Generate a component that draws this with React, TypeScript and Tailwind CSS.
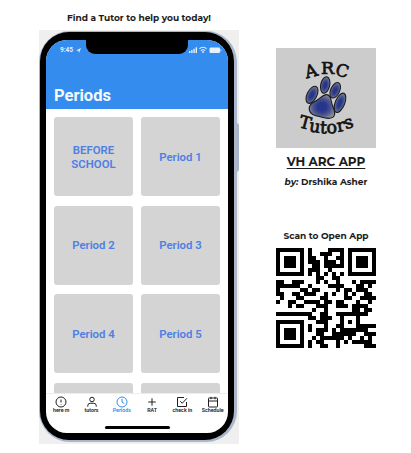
import type { ReactNode } from "react";

const QR_SIZE = 25;

/** Byte-mode, version 2, level L code with mask pattern 4. */
function qrMatrix(text: string): boolean[][] {
  const bits: number[] = [];
  const push = (value: number, length: number) => {
    for (let i = length - 1; i >= 0; i--) bits.push((value >> i) & 1);
  };
  push(4, 4);
  push(text.length, 8);
  for (const ch of text) push(ch.charCodeAt(0), 8);
  push(0, 4);
  const data: number[] = [];
  for (let i = 0; i < bits.length; i += 8) {
    data.push(parseInt(bits.slice(i, i + 8).join("").padEnd(8, "0"), 2));
  }
  for (let pad = 0xec; data.length < 34; pad = pad === 0xec ? 0x11 : 0xec) data.push(pad);

  const mul = (a: number, b: number) => {
    let r = 0;
    for (let i = 7; i >= 0; i--) {
      r = (r << 1) ^ ((r >> 7) * 0x11d);
      r ^= ((b >> i) & 1) * a;
    }
    return r;
  };
  const gen: number[] = new Array(10).fill(0);
  gen[9] = 1;
  let root = 1;
  for (let i = 0; i < 10; i++) {
    for (let j = 0; j < 10; j++) {
      gen[j] = mul(gen[j], root);
      if (j + 1 < 10) gen[j] ^= gen[j + 1];
    }
    root = mul(root, 2);
  }
  const ecc: number[] = new Array(10).fill(0);
  for (const b of data) {
    const factor = b ^ (ecc.shift() as number);
    ecc.push(0);
    gen.forEach((g, i) => (ecc[i] ^= mul(g, factor)));
  }
  const codewords = [...data, ...ecc];

  const m = Array.from({ length: QR_SIZE }, () => new Array<boolean>(QR_SIZE).fill(false));
  const used = Array.from({ length: QR_SIZE }, () => new Array<boolean>(QR_SIZE).fill(false));
  const set = (r: number, c: number, v: boolean) => {
    if (r < 0 || c < 0 || r >= QR_SIZE || c >= QR_SIZE) return;
    m[r][c] = v;
    used[r][c] = true;
  };
  for (let i = 0; i < QR_SIZE; i++) {
    set(6, i, i % 2 === 0);
    set(i, 6, i % 2 === 0);
  }
  for (const [r, c] of [[3, 3], [3, 21], [21, 3]]) {
    for (let y = -4; y <= 4; y++)
      for (let x = -4; x <= 4; x++) {
        const d = Math.max(Math.abs(x), Math.abs(y));
        set(r + y, c + x, d !== 2 && d !== 4);
      }
  }
  for (let y = -2; y <= 2; y++)
    for (let x = -2; x <= 2; x++) set(18 + y, 18 + x, Math.max(Math.abs(x), Math.abs(y)) !== 1);

  const format = 0b110011000101111;
  const f = (i: number) => ((format >> i) & 1) === 1;
  for (let i = 0; i <= 5; i++) set(i, 8, f(i));
  set(7, 8, f(6));
  set(8, 8, f(7));
  set(8, 7, f(8));
  for (let i = 9; i < 15; i++) set(8, 14 - i, f(i));
  for (let i = 0; i < 8; i++) set(8, QR_SIZE - 1 - i, f(i));
  for (let i = 8; i < 15; i++) set(QR_SIZE - 15 + i, 8, f(i));
  set(QR_SIZE - 8, 8, true);

  let n = 0;
  for (let right = QR_SIZE - 1; right >= 1; right -= 2) {
    if (right === 6) right = 5;
    for (let v = 0; v < QR_SIZE; v++) {
      for (let k = 0; k < 2; k++) {
        const c = right - k;
        const up = ((right + 1) & 2) === 0;
        const r = up ? QR_SIZE - 1 - v : v;
        if (used[r][c]) continue;
        const bit = n < codewords.length * 8 ? (codewords[n >> 3] >> (7 - (n & 7))) & 1 : 0;
        n++;
        const flip = (Math.floor(r / 2) + Math.floor(c / 3)) % 2 === 0;
        m[r][c] = (bit === 1) !== flip;
      }
    }
  }
  return m;
}

const modules = qrMatrix("https://vharc.glideapp.io/");

function QrCode() {
  return (
    <svg width="100" height="100" viewBox="0 0 25 25" shapeRendering="crispEdges" className="block">
      {modules.flatMap((row, r) =>
        row.map((on, c) => (on ? <rect key={`${r}-${c}`} x={c} y={r} width="1" height="1" /> : null)),
      )}
    </svg>
  );
}

function Logo() {
  const toes = [
    [312, 94.8, 4.8, 9.3, 27],
    [325.2, 85, 4.5, 8.3, 12],
    [335.2, 90.3, 4.5, 8.2, 24],
    [340, 102.8, 4.7, 10.2, 22],
  ];
  const letters: [string, number, number, number, number][] = [
    ["A", 312.5, 76.8, -15, 17.5],
    ["R", 327.5, 73.8, 0, 17.5],
    ["C", 340.8, 76.4, 15, 17],
    ["T", 303.6, 128.6, 15, 17.5],
    ["u", 314, 132.2, 9, 17.5],
    ["t", 323.2, 133.4, 3, 17.5],
    ["o", 332, 133.2, -3, 17.5],
    ["r", 341.8, 131.2, -10, 17.5],
    ["s", 350, 128, -16, 17.5],
  ];
  return (
    <svg width="100" height="100" viewBox="276 48 100 100" className="block bg-[#cccccc]">
      <defs>
        <radialGradient id="pad" cx="50%" cy="52%" r="58%">
          <stop offset="0.3" stopColor="#27368c" />
          <stop offset="0.6" stopColor="#4a558c" />
          <stop offset="1" stopColor="#98989a" />
        </radialGradient>
      </defs>
      <g fill="url(#pad)" stroke="#1b1b1f" strokeWidth="1.1">
        {toes.map(([x, y, rx, ry, a]) => (
          <ellipse key={x} cx={x} cy={y} rx={rx} ry={ry} transform={`rotate(${a} ${x} ${y})`} />
        ))}
        <path d="M326 94.600C329.500 94.300 331 98 331.500 102C332 106 335.500 110 334.600 114.500C333.500 119.500 327 118.800 321 117C315 115.500 310.500 115 309.300 110C308.300 104.500 313 102.500 316.500 100.500C320 98.500 322.500 95 326 94.600Z" />
      </g>
      <g fill="#111" stroke="#111" strokeWidth="0.7" textAnchor="middle" fontFamily="'DejaVu Serif', serif">
        {letters.map(([ch, x, y, a, s], i) => (
          <text key={i} x={x} y={y} fontSize={s} transform={`rotate(${a} ${x} ${y})`}>
            {ch}
          </text>
        ))}
      </g>
    </svg>
  );
}

function StatusIcons() {
  return (
    <svg width="34" height="8" viewBox="0 0 34 8" fill="#e4f1ff" className="block">
      <path d="M1 5h1.400v2H1zM3.200 4h1.400v3H3.200zM5.400 2.800h1.400V7H5.400zM7.600 1.300H9V7H7.600z" />
      <path d="M11.500 2.700a5 5 0 0 1 7 0M13 4.600a2.800 2.800 0 0 1 4 0" fill="none" stroke="#e4f1ff" strokeWidth="1.200" />
      <circle cx="15" cy="6" r="0.9" />
      <rect x="21.500" y="1.500" width="10.500" height="5.500" rx="1.300" />
      <rect x="32.500" y="3.300" width="0.800" height="2" />
    </svg>
  );
}

const icons: { label: string; active?: boolean; art: ReactNode }[] = [
  { label: "here m", art: <><circle cx="12" cy="12" r="10" /><path d="M12 7v6M12 16v1" /></> },
  { label: "tutors", art: <><circle cx="12" cy="7" r="4.500" /><path d="M3.500 21.500v-2a5 5 0 0 1 5-5h7a5 5 0 0 1 5 5v2" /></> },
  { label: "Periods", active: true, art: <><circle cx="12" cy="12" r="10" /><path d="M12 5.500V12l4.500 3" /></> },
  { label: "RAT", art: <path d="M12 4.500v15M4.500 12h15" /> },
  { label: "check in", art: <><path d="M8.500 10.500l4 4L22 4.500" /><path d="M21 12v9H3V3h13" /></> },
  { label: "Schedule", art: <><rect x="3" y="4" width="18" height="18" rx="1" /><path d="M3 10h18M8 1.500v5M16 1.500v5" /></> },
];

const cards = ["BEFORE SCHOOL", "Period 1", "Period 2", "Period 3", "Period 4", "Period 5", "", ""];

function Phone() {
  return (
    <div className="relative h-[414px] w-[200px] bg-[#efeff0] pt-px">
      <div className="absolute top-[93px] right-0 h-[49px] w-[3px] rounded-r-sm bg-[#a9b5c9]" />
      <div className="relative h-[411px] w-[198px] rounded-[31px] bg-[#aab6ca] pt-px pr-[3px] pb-[2px] pl-px">
        <div className="h-full rounded-[29px] bg-black pt-[8px] pr-[6px] pb-[6px] pl-[6px]">
          <div className="relative flex h-[393px] w-[182px] flex-col overflow-hidden rounded-[21px] bg-white">
            <div className="absolute top-[-4px] left-[40px] h-[18px] w-[102px] rounded-b-[9px] bg-black" />
            <div className="flex h-[69px] shrink-0 flex-col justify-between bg-[#348cee] pt-[5px] pr-[6px] pb-[3px] pl-[8px]">
              <div className="flex h-[10px] items-center justify-between pl-[6px] text-[6.5px] leading-[10px] font-bold text-[#e4f1ff]">
                <span className="flex items-center gap-[3px]">
                  9:45
                  <svg width="5" height="5" viewBox="0 0 5 5" fill="#e4f1ff"><path d="M0 2.500L5 0L3 5L2.500 2.700Z" /></svg>
                </span>
                <StatusIcons />
              </div>
              <div className="text-[16.5px] leading-5 font-bold text-[#f5faff]">Periods</div>
            </div>
            <div className="grid h-[284px] shrink-0 grid-cols-[79px_79px] content-start gap-x-[8px] gap-y-[9.6px] overflow-hidden pt-[8px] pl-[8px]">
              {cards.map((text, i) => (
                <div key={i} className="flex h-[79px] items-center justify-center rounded-[3px] bg-[#d4d4d4] px-4 pt-[2px] text-center text-[11.4px] leading-[13.5px] font-semibold text-[#4d7fe5]">
                  {text}
                </div>
              ))}
            </div>
            <div className="flex flex-1 flex-col items-center border-t border-[#ededed]">
              <div className="flex">
                {icons.map(({ label, active, art }) => (
                  <div key={label} className={active ? "flex w-[30.3px] flex-col items-center pt-[2px] text-[#348cee]" : "flex w-[30.3px] flex-col items-center pt-[2px] text-[#202020]"}>
                    <svg width="12" height="12" viewBox="0 0 24 24" fill="none" stroke="currentColor" strokeWidth="2">{art}</svg>
                    <span className="text-[5.3px] leading-[5px] font-semibold whitespace-nowrap">{label}</span>
                  </div>
                ))}
              </div>
              <div className="mt-[13px] h-[2.5px] w-[65px] rounded-full bg-black" />
            </div>
          </div>
        </div>
      </div>
    </div>
  );
}

export default function App() {
  return (
    <div className="flex h-[453px] w-[411px] bg-white pl-[39px] text-[#1c1c1c]">
      <div className="flex w-[200px] flex-col items-center font-['Roboto',sans-serif]">
        <h1 className="flex h-[30px] items-center pt-[5px] font-['Montserrat','Inter',sans-serif] text-[9px] font-bold tracking-[-0.01px] whitespace-nowrap">
          Find a Tutor to help you today!
        </h1>
        <Phone />
      </div>
      <div className="ml-[37px] flex w-[100px] flex-col items-center pt-[48px] font-['Montserrat','Inter',sans-serif] whitespace-nowrap">
        <Logo />
        <h2 className="mt-[5px] text-[12px] leading-[18px] font-bold underline decoration-1 underline-offset-[2px]">VH ARC APP</h2>
        <p className="mt-[5px] text-[9px] leading-[12px] font-bold"><em>by:</em> Drshika Asher</p>
        <p className="mt-[42px] mb-[6px] text-[9px] leading-[12px] font-bold">Scan to Open App</p>
        <QrCode />
      </div>
    </div>
  );
}
